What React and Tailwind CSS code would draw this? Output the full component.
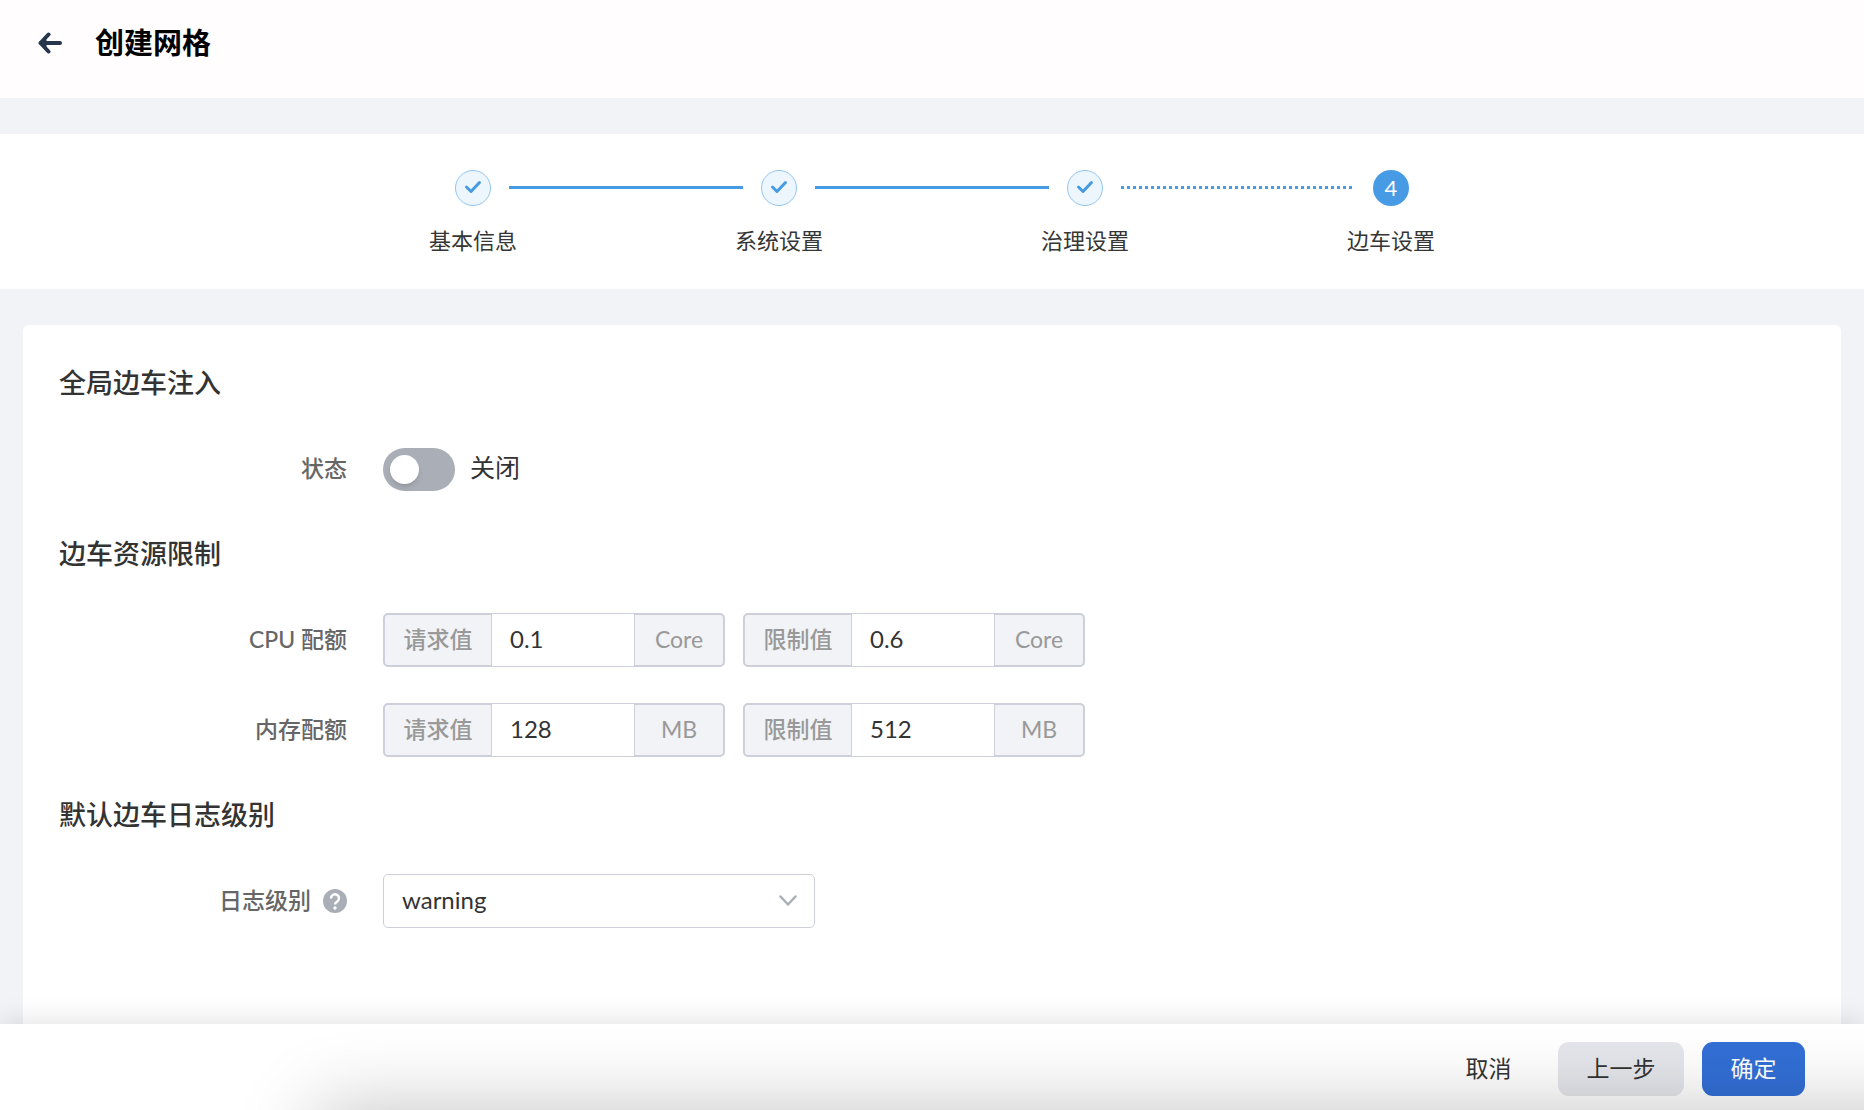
import { useState } from "react";

const steps = ["基本信息", "系统设置", "治理设置", "边车设置"];
const current = 3;

function BackIcon() {
  return (
    <svg width="24" height="22" viewBox="0 0 24 22" fill="none" stroke="#26364d" strokeWidth="4" strokeLinecap="round" strokeLinejoin="round">
      <path d="M22 11H3" />
      <path d="M10.5 2.5L2.5 11l8 8.5" />
      <path d="M3 11l5-3.500v7z" strokeWidth="1" fill="#26364d" />
    </svg>
  );
}

function StepIcon({ index }) {
  if (index === current) {
    return (
      <span className="flex size-9 items-center justify-center rounded-full bg-[#479be4] text-[22px] leading-none text-white">
        {index + 1}
      </span>
    );
  }
  return (
    <span className="flex size-9 items-center justify-center rounded-full border border-[#92c5f0] bg-[#edf6fd] pb-[2px]">
      <svg width="18" height="14" viewBox="0 0 18 14" fill="none" stroke="#479be4" strokeWidth="3" strokeLinecap="round" strokeLinejoin="round">
        <path d="M2.500 7L7 11.500L15.500 2.500" />
      </svg>
    </span>
  );
}

function Stepper() {
  return (
    <ol className="flex justify-center bg-white pt-9 pb-8">
      {steps.map((label, i) => (
        <li key={label} className="flex items-start">
          {i > 0 && (
            <span
              className={
                i === current
                  ? "mt-4 h-[3px] w-[234px] bg-[repeating-linear-gradient(90deg,#479be4_0_3px,transparent_3px_6px)]"
                  : "mt-4 h-[3px] w-[234px] bg-[#479be4]"
              }
            />
          )}
          <div className="flex w-[72px] flex-col items-center">
            <StepIcon index={i} />
            <span className="mt-[18px] text-[22px] leading-[33px] whitespace-nowrap text-[#363636]">{label}</span>
          </div>
        </li>
      ))}
    </ol>
  );
}

function Section({ title, children }) {
  return (
    <section>
      <h2 className="text-[27px] leading-[40px] font-medium text-[#333]">{title}</h2>
      <div className="mt-[39px] flex flex-col gap-9">{children}</div>
    </section>
  );
}

function Row({ label, htmlFor, help, children }) {
  return (
    <div className="flex min-h-[54px] items-center gap-9">
      <div className="flex w-72 items-center justify-end gap-3">
        <label htmlFor={htmlFor} className="pb-[2px] text-[23px] leading-[34px] font-medium text-[#666]">
          {label}
        </label>
        {help && (
          <svg width="24" height="24" viewBox="0 0 24 24" fill="none">
            <circle cx="12" cy="12" r="12" fill="#a9aeb7" />
            <path d="M8 9.500a4 4 0 1 1 6.300 3c-1.500 1-2.300 1.500-2.300 3" stroke="#fff" strokeWidth="2.500" />
            <circle cx="12" cy="19" r="1.700" fill="#fff" />
          </svg>
        )}
      </div>
      {children}
    </div>
  );
}

function QuotaInput({ id, name, unit, value, onChange }) {
  return (
    <div className="flex h-[54px] w-[342px] text-[23px]">
      <label
        htmlFor={id}
        className="flex w-[109px] items-center justify-center rounded-l-[5px] border-2 border-r border-[#cdcfda] bg-[#f1f3f7] pb-[2px] font-medium text-[#999]"
      >
        {name}
      </label>
      <input
        id={id}
        value={value}
        onChange={onChange}
        className="min-w-0 flex-1 border-y border-[#cdcfda] bg-white px-[18px] pb-[2px] text-[24px] text-[#333] outline-none"
      />
      <span className="flex w-[91px] items-center justify-center rounded-r-[5px] border-2 border-l border-[#cdcfda] bg-[#f1f3f7] pb-[2px] text-[#999]">
        {unit}
      </span>
    </div>
  );
}

export default function App() {
  const [enabled, setEnabled] = useState(false);
  const [level, setLevel] = useState("warning");
  const [quota, setQuota] = useState({
    cpuRequest: "0.1",
    cpuLimit: "0.6",
    memRequest: "128",
    memLimit: "512",
  });

  const field = (key) => ({
    id: key,
    value: quota[key],
    onChange: (e) => setQuota({ ...quota, [key]: e.target.value }),
  });

  return (
    <div className="flex h-screen flex-col bg-[#f1f3f7] font-['Lato','Noto_Sans_CJK_SC',sans-serif]">
      <header className="flex h-[98px] shrink-0 items-center gap-[33px] bg-[#fffdfe] pb-3 pl-[38px]">
        <button type="button" aria-label="返回">
          <BackIcon />
        </button>
        <h1 className="text-[29px] leading-[42px] font-bold text-black">创建网格</h1>
      </header>

      <main className="flex min-h-0 flex-1 flex-col overflow-hidden pt-9">
        <Stepper />

        <div className="mx-[23px] mt-9 flex flex-1 flex-col gap-[38px] rounded-t-md bg-white px-9 pt-[38px]">
          <Section title="全局边车注入">
            <Row label="状态" htmlFor="inject">
              <div className="flex items-center gap-[15px]">
                <input
                  id="inject"
                  type="checkbox"
                  role="switch"
                  checked={enabled}
                  onChange={(e) => setEnabled(e.target.checked)}
                  className="flex h-[43px] w-[72px] cursor-pointer appearance-none items-center rounded-full bg-[#a9aeb7] px-[7px] before:size-[29px] before:rounded-full before:bg-white before:shadow-md checked:justify-end checked:bg-[#326fd6]"
                />
                <span className="pb-1 text-[25px] leading-[36px] text-[#333]">{enabled ? "开启" : "关闭"}</span>
              </div>
            </Row>
          </Section>

          <Section title="边车资源限制">
            <Row label="CPU 配额" htmlFor="cpuRequest">
              <div className="flex gap-[18px]">
                <QuotaInput name="请求值" unit="Core" {...field("cpuRequest")} />
                <QuotaInput name="限制值" unit="Core" {...field("cpuLimit")} />
              </div>
            </Row>
            <Row label="内存配额" htmlFor="memRequest">
              <div className="flex gap-[18px]">
                <QuotaInput name="请求值" unit="MB" {...field("memRequest")} />
                <QuotaInput name="限制值" unit="MB" {...field("memLimit")} />
              </div>
            </Row>
          </Section>

          <Section title="默认边车日志级别">
            <Row label="日志级别" htmlFor="level" help>
              <div className="relative w-[432px]">
                <select
                  id="level"
                  value={level}
                  onChange={(e) => setLevel(e.target.value)}
                  className="h-[54px] w-full appearance-none rounded-[5px] border border-[#cdcfda] bg-white px-[18px] pb-[2px] text-[24px] text-[#333] outline-none"
                >
                  <option>debug</option>
                  <option>info</option>
                  <option>warning</option>
                  <option>error</option>
                </select>
                <svg className="pointer-events-none absolute top-[21px] right-[18px]" width="18" height="12" viewBox="0 0 18 12" fill="none" stroke="#a9aeb7" strokeWidth="2.500" strokeLinecap="round" strokeLinejoin="round">
                  <path d="M1.500 1.500L9 9.500l7.500-8" />
                </svg>
              </div>
            </Row>
          </Section>
        </div>
      </main>

      <footer className="relative flex shrink-0 justify-end gap-[18px] bg-white pt-[18px] pr-[59px] pb-[14px] text-[23px] shadow-[0_0_30px_rgba(0,0,0,0.14)]">
        <button type="button" className="h-[54px] min-w-[103px] px-7 pb-[2px] text-[#333]">
          取消
        </button>
        <button type="button" className="h-[54px] min-w-[126px] rounded-[11px] bg-[#e5e6eb] px-7 pb-[2px] text-[#333]">
          上一步
        </button>
        <button type="button" className="h-[54px] min-w-[103px] rounded-[11px] bg-[#326fd6] px-7 pb-[2px] text-white">
          确定
        </button>
        <div className="pointer-events-none absolute inset-0 overflow-hidden">
          <div className="absolute top-full -right-40 left-[316px] h-80 shadow-[0_0_75px_rgba(0,0,0,0.24)]" />
        </div>
      </footer>
    </div>
  );
}
